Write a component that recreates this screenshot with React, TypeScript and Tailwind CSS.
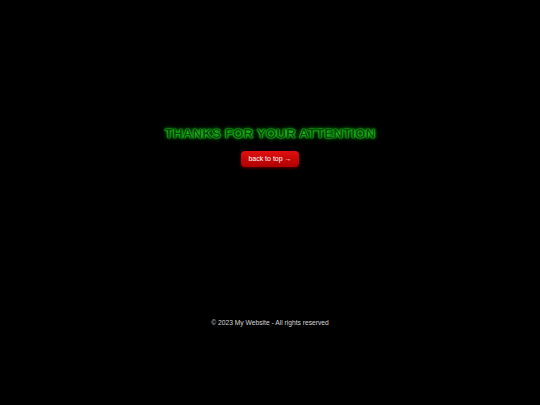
export default function App() {
  return (
    <div className="w-[540px] h-[405px] bg-black flex flex-col items-center font-['Liberation_Sans',Arial,sans-serif]">
      <div className="flex flex-col items-center pt-[127px]">
        <h1
          className="text-[13.5px] font-bold text-[#0a4a0a] leading-none [text-shadow:0_0_1px_#22ff22,0_0_2px_#22ff22,0_0_4px_#11cc11]"
        >
          THANKS FOR YOUR ATTENTION
        </h1>
        <button className="mt-[10px] h-[16px] px-[7.5px] rounded-[4px] bg-gradient-to-b from-[#e01010] to-[#b00000] text-white text-[7px] leading-none shadow-[0_1px_3px_rgba(255,0,0,0.4)]">
          back to top →
        </button>
      </div>
      <footer className="mt-auto mb-[77px] text-[#d8d8d8] text-[6.7px]">© 2023 My Website - All rights reserved</footer>
    </div>
  );
}
